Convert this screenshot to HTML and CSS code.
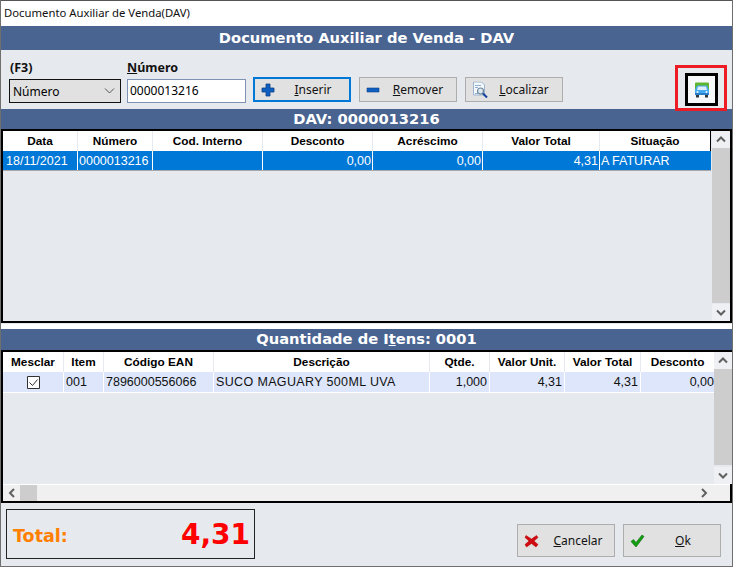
FILE: index.html
```html
<!DOCTYPE html>
<html lang="pt-BR">
<head>
<meta charset="utf-8">
<title>Documento Auxiliar de Venda(DAV)</title>
<link rel="stylesheet" href="styles.css">
</head>
<body>
<div class="window">
  <div class="titlebar">Documento Auxiliar de Venda(DAV)</div>
  <div class="band band-main">Documento Auxiliar de Venda - DAV</div>
  <div class="toolbar">
    <div class="field field-f3">
      <span class="field-label">(F3)</span>
      <div class="select"><span>Número</span>
        <svg class="select-caret" width="11" height="6" viewBox="0 0 11 6"><path d="M1 .5 5.500 5 10 .5" fill="none" stroke="#555" stroke-width="1"/></svg>
      </div>
    </div>
    <div class="field field-num">
      <span class="field-label"><u>N</u>úmero</span>
      <div class="input">0000013216</div>
    </div>
    <div class="actions">
      <button class="btn btn-focus">
        <svg class="btn-icon" width="14" height="14" viewBox="0 0 14 14"><path d="M5 1h4v4h4v4H9v4H5V9H1V5h4z" fill="#0f5fc0" stroke="#0a3f8a" stroke-width=".8"/></svg>
        <span class="btn-text"><u>I</u>nserir</span>
      </button>
      <button class="btn">
        <svg class="btn-icon" width="14" height="14" viewBox="0 0 14 14"><path d="M1 5h12v4H1z" fill="#0f5fc0" stroke="#0a3f8a" stroke-width=".6"/></svg>
        <span class="btn-text"><u>R</u>emover</span>
      </button>
      <button class="btn">
        <svg class="btn-icon" width="17" height="17" viewBox="0 0 17 17"><path d="M1.500.5h8l3 3v10h-11z" fill="#f4f8fc" stroke="#9db4cf"/><path d="M3 4h6M3 6h3M3 12h3" stroke="#8fb0d4"/><circle cx="8.500" cy="9.500" r="3" fill="#dbe9f5" stroke="#6f8596" stroke-width="1.200"/><path d="M11 12l4 4" stroke="#123f9c" stroke-width="2"/></svg>
        <span class="btn-text"><u>L</u>ocalizar</span>
      </button>
    </div>
    <div class="highlight">
      <button class="btn-truck" aria-label="Veículo">
        <svg width="16" height="16" viewBox="0 0 16 16"><path d="M1 1.500Q1 .5 2 .5h12q1 0 1 1V9H1z" fill="#5fb52e"/><path d="M3 3.500h10l2 4.500v5H1V8z" fill="#45a9f0"/><path d="M4 4.500h8l1 3.500H3z" fill="#dcecfa"/><path d="M1 11h14v2H1z" fill="#2a7fc9"/><path d="M2 13h3v2.500H2zM11 13h3v2.500h-3z" fill="#2b3640"/><circle cx="3.500" cy="10" r="1" fill="#f2f8ff"/><circle cx="12.500" cy="10" r="1" fill="#f2f8ff"/></svg>
      </button>
    </div>
  </div>

  <div class="band band-sub">DAV: 0000013216</div>
  <div class="grid-panel panel-dav">
    <div class="grid-body">
      <div class="grid-rows">
        <div class="row row-head cols-dav">
          <div class="cell">Data</div><div class="cell">Número</div><div class="cell">Cod. Interno</div><div class="cell">Desconto</div><div class="cell">Acréscimo</div><div class="cell">Valor Total</div><div class="cell">Situação</div>
        </div>
        <div class="row row-selected cols-dav">
          <div class="cell cell-first">18/11/2021</div><div class="cell">0000013216</div><div class="cell"></div><div class="cell num">0,00</div><div class="cell num">0,00</div><div class="cell num">4,31</div><div class="cell">A FATURAR</div>
        </div>
      </div>
      <div class="vscroll">
        <svg class="arrow" width="18" height="17" viewBox="0 0 18 17"><path d="M5 10.500 9 6.500l4 4" fill="none" stroke="#606060" stroke-width="2"/></svg>
        <div class="thumb thumb-dav"></div>
        <svg class="arrow arrow-end" width="18" height="17" viewBox="0 0 18 17"><path d="M5 6.500l4 4 4-4" fill="none" stroke="#606060" stroke-width="2"/></svg>
      </div>
    </div>
  </div>

  <div class="splitter"></div>
  <div class="band band-sub band-items">Quantidade de I<u>t</u>ens: 0001</div>
  <div class="grid-panel panel-items">
    <div class="grid-body">
      <div class="grid-rows">
        <div class="row row-head cols-items">
          <div class="cell">Mesclar</div><div class="cell">Item</div><div class="cell">Código EAN</div><div class="cell">Descrição</div><div class="cell">Qtde.</div><div class="cell">Valor Unit.</div><div class="cell">Valor Total</div><div class="cell">Desconto</div>
        </div>
        <div class="row row-item cols-items">
          <div class="cell cell-check"><svg width="13" height="13" viewBox="0 0 13 13"><path d="M.5.500h12v12H.5z" fill="#fff" stroke="#333"/><path d="M2.500 6.500l3 3 5-6" fill="none" stroke="#333"/></svg></div>
          <div class="cell">001</div><div class="cell">7896000556066</div><div class="cell cell-desc">SUCO MAGUARY 500ML UVA</div><div class="cell num">1,000</div><div class="cell num">4,31</div><div class="cell num">4,31</div><div class="cell num">0,00</div>
        </div>
      </div>
      <div class="vscroll">
        <svg class="arrow" width="18" height="17" viewBox="0 0 18 17"><path d="M5 10.500 9 6.500l4 4" fill="none" stroke="#606060" stroke-width="2"/></svg>
        <div class="thumb thumb-items"></div>
        <svg class="arrow arrow-end" width="18" height="17" viewBox="0 0 18 17"><path d="M5 6.500l4 4 4-4" fill="none" stroke="#606060" stroke-width="2"/></svg>
      </div>
    </div>
    <div class="hscroll">
      <svg width="17" height="16" viewBox="0 0 17 16"><path d="M11 4 7 8l4 4" fill="none" stroke="#606060" stroke-width="2"/></svg>
      <div class="hthumb"></div>
      <svg class="arrow-right" width="17" height="16" viewBox="0 0 17 16"><path d="M7 4l4 4-4 4" fill="none" stroke="#606060" stroke-width="2"/></svg>
    </div>
  </div>

  <div class="footer">
    <div class="total">
      <span class="total-label">Total:</span>
      <span class="total-value">4,31</span>
    </div>
    <div class="footer-actions">
      <button class="btn btn-tall">
        <svg class="btn-icon" width="15" height="14" viewBox="0 0 15 14"><path d="M2 1.500 7.500 5 12.500 1.500 14 3.500 10 7l4 3.500-2 2.500-4.500-3.500L2.500 13 1 10.500 5 7 1 3.500z" fill="#cf0a10" stroke="#b00" stroke-width=".5"/></svg>
        <span class="btn-text"><u>C</u>ancelar</span>
      </button>
      <button class="btn btn-tall">
        <svg class="btn-icon" width="15" height="14" viewBox="0 0 15 14"><path d="M1 7.500 3.500 5.500 6 8.500 12 1l2 1.500L6 13z" fill="#12a012" stroke="#0a6a0a" stroke-width=".6"/></svg>
        <span class="btn-text btn-text-ok"><u>O</u>k</span>
      </button>
    </div>
  </div>
</div>
</body>
</html>
```
FILE: styles.css
```css
* { box-sizing: border-box; }
html, body { margin: 0; padding: 0; }
body { width: 733px; height: 567px; overflow: hidden; background: #555; }
.window {
  width: 733px; height: 567px;
  display: flex; flex-direction: column;
  background: #e6e9ee;
  border-left: 1px solid #6f6f6f;
  border-right: 1px solid #6f6f6f;
  border-bottom: 1px solid #6f6f6f;
  font-family: "Liberation Sans", Arial, sans-serif;
  color: #000;
}
.titlebar {
  height: 26px; flex: none;
  background: #fff;
  border-top: 1px solid #555;
  padding-left: 3px;
  font: 11.300px/24px "Noto Sans", "Open Sans", sans-serif;
  color: #111;
}
.band {
  flex: none;
  background: #4a6491;
  color: #fff;
  text-align: center;
  font-family: "DejaVu Sans", sans-serif;
  font-weight: 700;
}
.band-main { height: 24px; font-size: 14.700px; line-height: 23px; }
.band-sub { height: 20px; font-size: 14.700px; line-height: 20px; }
.band-items { height: 21px; }
.toolbar {
  position: relative;
  flex: none;
  height: 59px;
  display: flex;
  align-items: flex-start;
  padding: 10px 0 0 8px;
}
.field { display: flex; flex-direction: column; margin-right: 6px; }
.field-label {
  font: 700 12.500px/16px "Noto Sans", sans-serif;
  height: 19px;
  color: #111;
}
.field-f3 .field-label { padding-left: 1px; }
.select {
  width: 112px; height: 24px;
  border: 1px solid #111;
  background: #e1e1e1;
  display: flex; align-items: center; justify-content: space-between;
  padding: 0 4px 0 3px;
  font: 12px "Noto Sans", sans-serif;
}
.select-caret { margin-right: 1px; }
.input {
  width: 119px; height: 24px;
  border: 1px solid #7f94b5;
  background: #fff;
  padding-left: 2px;
  font: 12px/21px "Noto Sans", sans-serif;
}
.actions { display: flex; gap: 8px; margin: 17px 0 0 1px; }
.btn {
  position: relative;
  width: 98px; height: 25px;
  border: 1px solid #adadad;
  background: #e1e1e1;
  padding: 0;
  display: flex; align-items: center;
  font: 12px "Noto Sans", sans-serif;
  color: #111;
}
.btn-focus { border: 2px solid #0078d7; }
.btn-icon { flex: none; position: absolute; left: 6px; top: 50%; transform: translateY(-50%); }
.btn-text { flex: 1; text-align: center; padding-left: 20px; }
.btn-focus .btn-text { padding-left: 22px; }
.highlight {
  position: absolute;
  left: 674px; top: 15px;
  width: 52px; height: 46px;
  border: 3px solid #ed1c24;
  padding: 5px 6px 2px 7px;
}
.btn-truck {
  width: 33px; height: 33px;
  border: 3px solid #000;
  background: #f7f8fa;
  padding: 0;
  display: flex; align-items: center; justify-content: center;
}
.grid-panel {
  flex: none;
  width: 731px;
  border: 2px solid #000;
  background: #e6e9ee;
  display: flex; flex-direction: column;
}
.panel-dav { height: 194px; }
.panel-items { height: 153px; }
.splitter {
  flex: none;
  height: 6px;
  background: #fff;
  border-top: 1px solid #e6e9ee;
  border-bottom: 1px solid #fff;
  box-shadow: inset 0 2px 0 #fff, inset 0 -2px 0 #fff, inset 0 3px 0 #a6a6a6;
}
.grid-body { flex: 1; min-height: 0; display: flex; justify-content: space-between; }
.grid-rows { display: flex; flex-direction: column; }
.row { display: grid; column-gap: 1px; font-size: 12.500px; }
.cols-dav { grid-template-columns: 74px 74px 109px 109px 109px 116px 111px; }
.cols-items { grid-template-columns: 60px 39px 109px 215px 59px 74px 75px 73px; }
.row-head { height: 20px; background: #e6e9ee; }
.row-head .cell {
  background: #fff;
  font-size: 11.800px;
  font-weight: 700;
  text-align: center;
  line-height: 20px;
}
.cols-dav.row-head .cell:last-child { border-right: 1px solid #000; }
.row-selected { height: 20px; background: #fff; border-bottom: 1px solid #a8a8a8; }
.row-selected .cell { background: #0078d7; color: #fff; padding: 0 1px; line-height: 21px; }
.row-selected .cell-first { padding-left: 3px; }
.row-item { height: 21px; background: #fff; border-bottom: 1px solid #fff; }
.row-item .cell { background: #dde6fb; color: #111; padding: 0 2px; line-height: 21px; }
.row-item .cell-desc { letter-spacing: .36px; }
.cell { white-space: nowrap; overflow: hidden; }
.cell.num { text-align: right; }
.row-item .cell:last-child { padding-right: 0; }
.row-item .cell-check { display: flex; align-items: center; justify-content: center; padding: 0; }
.vscroll {
  width: 18px; flex: none;
  background: #e6e9ee;
  display: flex; flex-direction: column;
}
.arrow { display: block; flex: none; background: #eef0f3; }
.arrow-end { margin-top: auto; }
.thumb { width: 18px; background: #cdcdcd; }
.thumb-dav { height: 155px; }
.thumb-items { height: 96px; }
.hscroll {
  flex: none;
  height: 17px;
  background: #f0f0f0;
  border-top: 1px solid #fff;
  display: flex; align-items: center;
}
.hthumb { width: 17px; height: 16px; background: #cdcdcd; }
.arrow-right { margin-left: auto; margin-right: 18px; }
.footer {
  flex: 1;
  display: flex;
  align-items: flex-start;
  justify-content: space-between;
  padding: 6px 11px 0 5px;
}
.total {
  width: 249px; height: 50px;
  border: 1px solid #222;
  display: flex; align-items: center; justify-content: space-between;
  padding: 0 4px 0 6px;
  font-family: "DejaVu Sans", Verdana, sans-serif;
  font-weight: 700;
}
.total-label { color: #ff8000; font-size: 17.500px; padding-top: 4px; }
.total-value { color: #ff0000; font-size: 28px; }
.footer-actions { display: flex; gap: 8px; margin-top: 15px; }
.btn-tall { height: 33px; }
.btn-tall .btn-text { padding-left: 24px; }
.btn-tall .btn-text-ok { padding-left: 22px; }
```
